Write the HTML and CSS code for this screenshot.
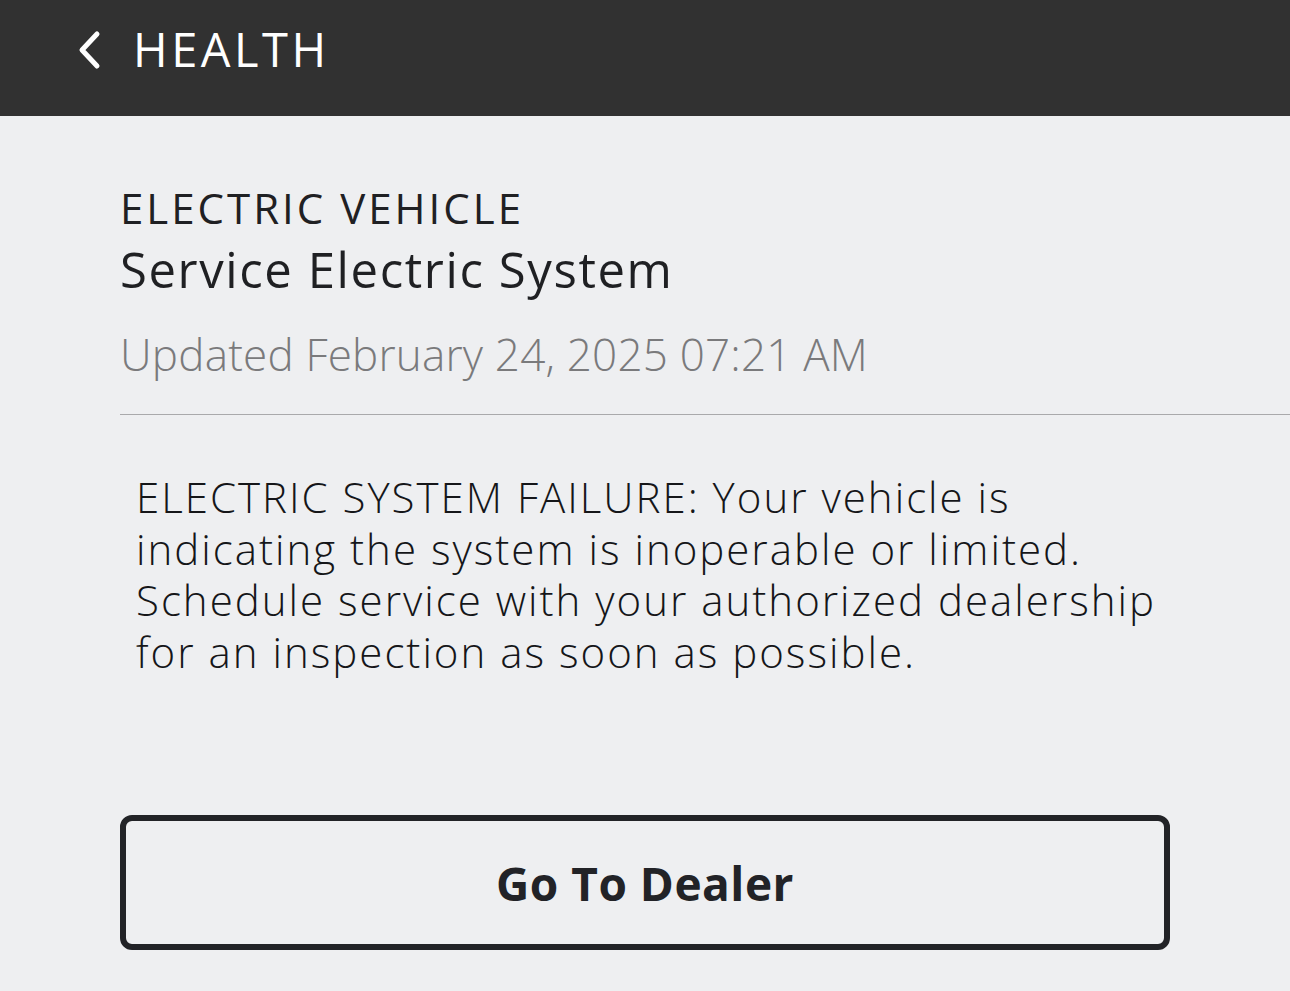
FILE: index.html
```html
<!DOCTYPE html>
<html lang="en">
<head>
  <meta charset="UTF-8" /><meta name="viewport" content="width=device-width, initial-scale=1.0" />
  <title>Health</title>
  <link rel="stylesheet" href="styles.css">
</head>
<body>
  <header class="topbar">
    <svg class="back" width="26" height="40" viewBox="0 0 26 40"><polyline points="20,4 5,20 20,36" fill="none" stroke="#fff" stroke-width="5" stroke-linecap="round" stroke-linejoin="round"/></svg>
    <h1>HEALTH</h1>
  </header>

  <main class="content">
    <div class="category">ELECTRIC VEHICLE</div>
    <div class="title">Service Electric System</div>
    <div class="updated">Updated February 24, 2025 07:21 AM</div>
    <hr class="divider" />
    <p class="message">ELECTRIC SYSTEM FAILURE: Your vehicle is indicating the system is inoperable or limited. Schedule service with your authorized dealership for an inspection as soon as possible.</p>
    <button class="dealer">Go To Dealer</button>
  </main>
</body>
</html>
```

FILE: styles.css
```css
body { margin: 0; background: #eeeff1; font-family: "Open Sans", "DejaVu Sans", sans-serif; color: #1f2023; overflow: hidden; }
.topbar { height: 116px; background: #313131; display: flex; align-items: center; padding-left: 77px; box-sizing: border-box; gap: 30px; }
.topbar h1 { margin: 0; color: #fff; font-size: 47px; font-weight: 500; letter-spacing: 3.5px; line-height: 1; padding-bottom: 18px; }
.back { margin-bottom: 16px; }
.content { padding: 73px 0 0 120px; }
.category { font-size: 42px; line-height: 1; margin-top: -2px; letter-spacing: 3px; }
.title { font-size: 49px; line-height: 1; margin-top: 16px; letter-spacing: 1.6px; }
.updated { font-size: 44px; font-weight: 300; color: #7a7a7c; line-height: 1; margin-top: 38px; letter-spacing: 0.2px; }
.divider { border: 0; border-top: 1px solid #a9a9ab; margin: 38px 0 0; }
.message { margin: 56px 0 0 16px; width: 1050px; font-size: 42px; font-weight: 300; line-height: 51.5px; letter-spacing: 2px; color: #151619; }
.dealer { display: block; margin-top: 138px; width: 1050px; height: 135px; box-sizing: border-box; border: 6px solid #222327; border-radius: 12px; background: transparent; font-family: inherit; font-size: 46px; font-weight: 700; color: #222327; letter-spacing: 0.5px; }
```
